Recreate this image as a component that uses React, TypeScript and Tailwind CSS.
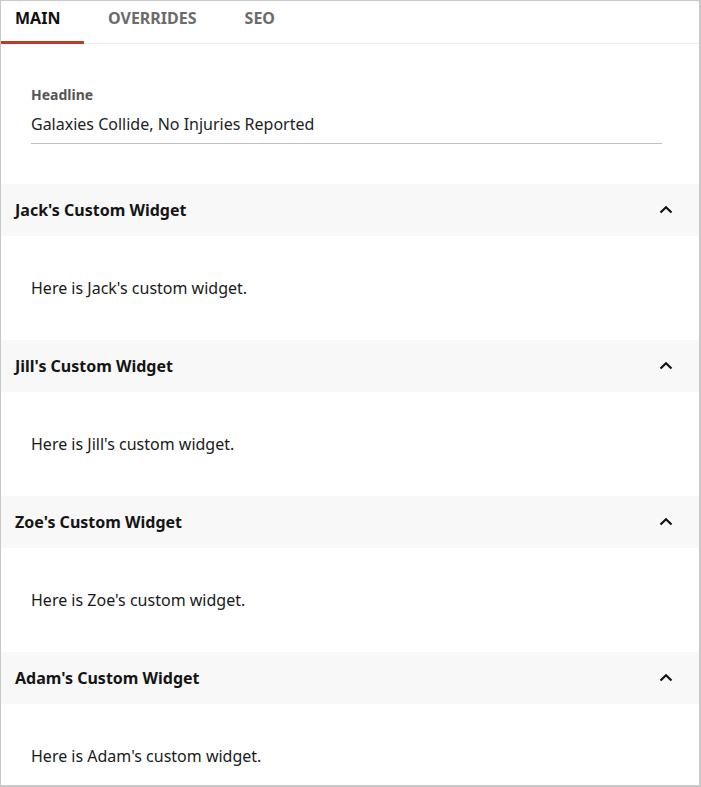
import { useState } from "react"

const widgets = [
  { title: "Jack's Custom Widget", body: "Here is Jack's custom widget." },
  { title: "Jill's Custom Widget", body: "Here is Jill's custom widget." },
  { title: "Zoe's Custom Widget", body: "Here is Zoe's custom widget." },
  { title: "Adam's Custom Widget", body: "Here is Adam's custom widget." },
]

const tabs = ["Main", "Overrides", "SEO"]

function Chevron() {
  return (
    <svg width="14" height="10" viewBox="0 0 14 10" fill="none" className="block">
      <path d="M1.5 7.5 L7 2.2 L12.5 7.5" stroke="#111" strokeWidth="2.2" />
    </svg>
  )
}

export default function App() {
  const [active, setActive] = useState(0)

  return (
    <div
      className="h-[787px] w-[701px] overflow-hidden bg-white"
      style={{ fontFamily: '"Noto Sans", "Open Sans", sans-serif' }}
    >
      <div className="flex h-full flex-col overflow-hidden border-t border-l border-r-2 border-b-2 border-[#c8c8c8]">
        <div className="flex h-[43px] shrink-0 border-b border-[#ebebeb]">
          {tabs.map((tab, i) => (
            <button
              key={tab}
              onClick={() => setActive(i)}
              className={
                i === 0
                  ? "-mb-px flex w-[83px] items-start border-b-[3px] pl-[14px] pt-[7px] text-[16px] font-bold uppercase leading-5 " +
                    (active === i ? "border-[#c0392b] text-[#111]" : "border-transparent text-[#6b6b6b]")
                  : "-mb-px flex items-start border-b-[3px] px-6 pt-[7px] text-[16px] font-bold uppercase leading-5 " +
                    (active === i ? "border-[#c0392b] text-[#111]" : "border-transparent text-[#6b6b6b]")
              }
            >
              {tab}
            </button>
          ))}
        </div>

        <div className="shrink-0 pl-[30px] pt-[41px] pb-[40px]">
          <div className="w-[631px] border-b border-[#bdbdbd] pb-[7px]">
            <div className="text-[14px] font-bold leading-5 text-[#555]">Headline</div>
            <div className="mt-[7px] text-[16px] leading-6 text-[#222]">
              Galaxies Collide, No Injuries Reported
            </div>
          </div>
        </div>

        {widgets.map((w) => (
          <div key={w.title} className="shrink-0">
            <div className="flex h-[52px] items-center justify-between bg-[#f8f8f8] pl-[14px] pr-[26px]">
              <span className="text-[16px] font-bold leading-6 text-[#151515]">{w.title}</span>
              <Chevron />
            </div>
            <div className="flex h-[104px] items-center pl-[30px] text-[16px] leading-6 text-[#1a1a1a]">
              {w.body}
            </div>
          </div>
        ))}
      </div>
    </div>
  )
}
